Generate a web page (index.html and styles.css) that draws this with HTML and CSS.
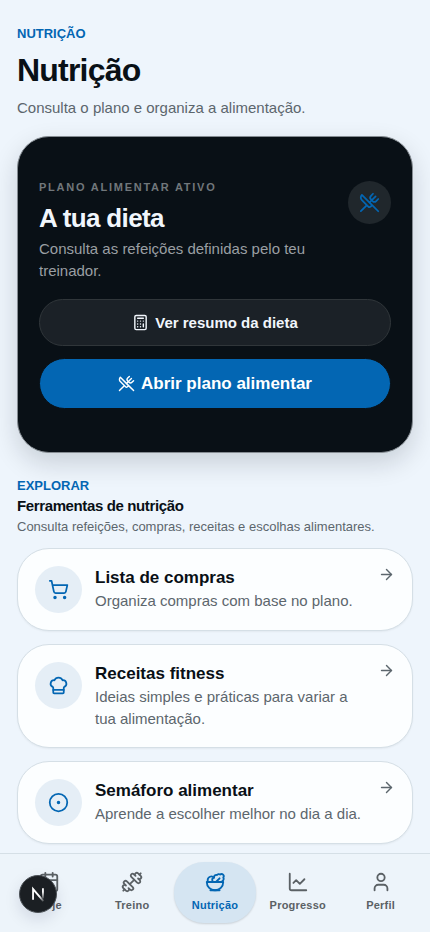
FILE: index.html
```html
<!DOCTYPE html>
<html lang="pt">
<head>
<meta charset="utf-8">
<meta name="viewport" content="width=device-width, initial-scale=1">
<title>Nutrição</title>
<link rel="stylesheet" href="styles.css">
</head>
<body>
<svg class="sprite" aria-hidden="true">
  <symbol id="utensils" viewBox="0 0 24 24"><path d="m16 2-2.3 2.3a3 3 0 0 0 0 4.2l1.8 1.8a3 3 0 0 0 4.2 0L22 8"/><path d="M15 15 3.3 3.3a4.2 4.2 0 0 0 0 6l7.3 7.3c.7.7 2 .7 2.8 0L15 15Zm0 0 7 7"/><path d="m2.1 21.8 6.4-6.3"/><path d="m19 5-7 7"/></symbol>
  <symbol id="arrow" viewBox="0 0 24 24"><path d="M5 12h14"/><path d="m12 5 7 7-7 7"/></symbol>
</svg>
<main class="page">
  <header class="page-header">
    <p class="eyebrow">NUTRIÇÃO</p>
    <h1>Nutrição</h1>
    <p class="lead">Consulta o plano e organiza a alimentação.</p>
  </header>

  <section class="plan">
    <div class="plan-head">
      <div class="plan-text">
        <p class="plan-label">PLANO ALIMENTAR ATIVO</p>
        <h2>A tua dieta</h2>
        <p class="plan-desc">Consulta as refeições definidas pelo teu treinador.</p>
      </div>
      <span class="plan-icon"><svg class="icon icon-md" aria-hidden="true"><use href="#utensils"/></svg></span>
    </div>
    <div class="plan-actions">
      <button class="btn btn-ghost" type="button">
        <svg class="icon icon-sm" viewBox="0 0 24 24" aria-hidden="true"><rect width="16" height="20" x="4" y="2" rx="2"/><path d="M8 6h8M16 14v4M16 10h.01M12 10h.01M8 10h.01M12 14h.01M8 14h.01M12 18h.01M8 18h.01"/></svg>
        Ver resumo da dieta
      </button>
      <button class="btn btn-primary" type="button">
        <svg class="icon icon-sm" aria-hidden="true"><use href="#utensils"/></svg>
        Abrir plano alimentar
      </button>
    </div>
  </section>

  <section class="tools">
    <header class="tools-header">
      <p class="eyebrow">EXPLORAR</p>
      <h2>Ferramentas de nutrição</h2>
      <p class="tools-desc">Consulta refeições, compras, receitas e escolhas alimentares.</p>
    </header>
    <div class="tool-list">
      <a class="tool" href="#compras">
        <span class="tool-icon"><svg class="icon icon-md" viewBox="0 0 24 24" aria-hidden="true"><circle cx="8" cy="21" r="1"/><circle cx="19" cy="21" r="1"/><path d="M2.05 2.05h2l2.66 12.42a2 2 0 0 0 2 1.58h9.78a2 2 0 0 0 1.95-1.57l1.65-7.43H5.12"/></svg></span>
        <span class="tool-text"><strong>Lista de compras</strong><span>Organiza compras com base no plano.</span></span>
        <svg class="icon icon-sm tool-arrow" aria-hidden="true"><use href="#arrow"/></svg>
      </a>
      <a class="tool" href="#receitas">
        <span class="tool-icon"><svg class="icon icon-md" viewBox="0 0 24 24" aria-hidden="true"><path d="M17 21a1 1 0 0 0 1-1v-5.35c0-.457.316-.844.727-1.041a4 4 0 0 0-2.134-7.589 5 5 0 0 0-9.186 0 4 4 0 0 0-2.134 7.588c.411.198.727.585.727 1.041V20a1 1 0 0 0 1 1Z"/><path d="M6 17h12"/></svg></span>
        <span class="tool-text"><strong>Receitas fitness</strong><span>Ideias simples e práticas para variar a tua alimentação.</span></span>
        <svg class="icon icon-sm tool-arrow" aria-hidden="true"><use href="#arrow"/></svg>
      </a>
      <a class="tool" href="#semaforo">
        <span class="tool-icon"><svg class="icon icon-md" viewBox="0 0 24 24" aria-hidden="true"><circle cx="12" cy="12" r="10"/><circle cx="12" cy="12" r="1"/></svg></span>
        <span class="tool-text"><strong>Semáforo alimentar</strong><span>Aprende a escolher melhor no dia a dia.</span></span>
        <svg class="icon icon-sm tool-arrow" aria-hidden="true"><use href="#arrow"/></svg>
      </a>
    </div>
  </section>
</main>

<nav class="tabbar">
  <a class="tab" href="#hoje">
    <svg class="icon icon-nav" viewBox="0 0 24 24" aria-hidden="true"><path d="M8 2v4M16 2v4M3 10h18"/><rect width="18" height="18" x="3" y="4" rx="2"/></svg>
    Hoje
  </a>
  <a class="tab" href="#treino">
    <svg class="icon icon-nav" viewBox="0 0 24 24" aria-hidden="true"><path d="M17.596 12.768a2 2 0 1 0 2.829-2.829l-1.768-1.767a2 2 0 0 0 2.828-2.829l-2.828-2.828a2 2 0 0 0-2.829 2.828l-1.767-1.768a2 2 0 1 0-2.829 2.829z"/><path d="m2.5 21.500 1.400-1.400"/><path d="m20.100 3.900 1.400-1.400"/><path d="M5.343 21.485a2 2 0 1 0 2.829-2.828l1.767 1.768a2 2 0 1 0 2.829-2.829l-6.364-6.364a2 2 0 1 0-2.829 2.829l1.768 1.767a2 2 0 0 0-2.828 2.829z"/><path d="m9.600 14.400 4.800-4.800"/></svg>
    Treino
  </a>
  <a class="tab tab-active" href="#nutricao" aria-current="page">
    <svg class="icon icon-nav" viewBox="0 0 24 24" aria-hidden="true"><path d="M7 21h10"/><path d="M12 21a9 9 0 0 0 9-9H3a9 9 0 0 0 9 9Z"/><path d="M11.38 12a2.4 2.4 0 0 1-.4-4.77 2.4 2.4 0 0 1 3.2-2.77 2.4 2.4 0 0 1 3.47-.63 2.4 2.4 0 0 1 3.37 3.37 2.4 2.4 0 0 1-1.1 3.7 2.51 2.51 0 0 1 .03 1.1"/><path d="m13 12 4-4"/><path d="M10.9 7.25A3.99 3.99 0 0 0 4 10c0 .73.2 1.41.54 2"/></svg>
    Nutrição
  </a>
  <a class="tab" href="#progresso">
    <svg class="icon icon-nav" viewBox="0 0 24 24" aria-hidden="true"><path d="M3 3v16a2 2 0 0 0 2 2h16"/><path d="m19 9-5 5-4-4-3 3"/></svg>
    Progresso
  </a>
  <a class="tab" href="#perfil">
    <svg class="icon icon-nav" viewBox="0 0 24 24" aria-hidden="true"><path d="M19 21v-2a4 4 0 0 0-4-4H9a4 4 0 0 0-4 4v2"/><circle cx="12" cy="7" r="4"/></svg>
    Perfil
  </a>
</nav>

<button class="dev-badge" type="button" aria-label="Ferramentas de desenvolvimento">
  <svg viewBox="0 0 40 40" aria-hidden="true">
    <defs>
      <linearGradient id="fade-a" x1="0" y1="0" x2="1" y2="1"><stop offset=".6" stop-color="#fff"/><stop offset="1" stop-color="#fff" stop-opacity=".2"/></linearGradient>
      <linearGradient id="fade-b" gradientUnits="userSpaceOnUse" x1="0" y1="14" x2="0" y2="26"><stop offset=".3" stop-color="#fff"/><stop offset="1" stop-color="#fff" stop-opacity=".1"/></linearGradient>
    </defs>
    <path d="M14.500 26.500V14.500L26 28" fill="none" stroke="url(#fade-a)" stroke-width="2"/>
    <path d="M25.500 13.500V25" fill="none" stroke="url(#fade-b)" stroke-width="2"/>
  </svg>
</button>
</body>
</html>
```

FILE: styles.css
```css
:root {
  --bg: #eef5fc;
  --ink: #091016;
  --muted: #5c666d;
  --blue: #0366b3;
  --line: #d5dfe6;
}

* {
  box-sizing: border-box;
}

body {
  margin: 0;
  background: var(--bg);
  color: var(--ink);
  font-family: "Liberation Sans", Arial, sans-serif;
  font-size: 15px;
  line-height: 22px;
}

h1, h2, p {
  margin: 0;
}

a {
  color: inherit;
  text-decoration: none;
}

.sprite {
  display: none;
}

.icon {
  flex: none;
  fill: none;
  stroke: currentColor;
  stroke-width: 2;
  stroke-linecap: round;
  stroke-linejoin: round;
}

.icon-sm {
  width: 17px;
  height: 17px;
}

.icon-md {
  width: 21px;
  height: 21px;
}

.icon-nav {
  width: 22px;
  height: 22px;
}

.page {
  padding: 24px 17px 104px;
}

.eyebrow {
  color: var(--blue);
  font-size: 13px;
  font-weight: 700;
  line-height: 20px;
}

h1 {
  margin-top: 8px;
  font-size: 32px;
  line-height: 36px;
  letter-spacing: -0.025em;
}

.lead {
  margin-top: 9px;
  color: var(--muted);
}

.plan {
  margin-top: 17px;
  padding: 40px 21px 43px;
  border: 1px solid #858c92;
  border-radius: 32px;
  background: var(--ink);
  color: #f1f6fc;
  box-shadow: 0 10px 26px rgba(9, 16, 30, 0.16);
}

.plan-head {
  display: flex;
  align-items: flex-start;
  justify-content: space-between;
  gap: 16px;
}

.plan-text {
  max-width: 288px;
}

.plan-label {
  color: #71777b;
  font-size: 11px;
  font-weight: 700;
  line-height: 20px;
  letter-spacing: 0.16em;
}

.plan h2 {
  margin-top: 4px;
  font-size: 26px;
  line-height: 34px;
  letter-spacing: -0.025em;
}

.plan-desc {
  margin-top: 3px;
  color: #9a9fa3;
}

.plan-icon {
  display: grid;
  flex: none;
  place-items: center;
  width: 43px;
  height: 43px;
  margin-top: 4px;
  border-radius: 50%;
  background: #20272c;
  color: var(--blue);
}

.plan-actions {
  display: grid;
  gap: 12px;
  margin-top: 17px;
}

.btn {
  display: flex;
  align-items: center;
  justify-content: center;
  gap: 6px;
  border: 1px solid transparent;
  border-radius: 26px;
  padding: 0 16px;
  font-family: inherit;
  font-weight: 700;
}

.btn-ghost {
  height: 47px;
  border-color: #30363a;
  background: #1b2127;
  color: #f1f6fc;
  font-size: 15px;
}

.btn-primary {
  height: 51px;
  border-color: var(--ink);
  background: var(--blue);
  color: #fff;
  font-size: 17px;
}

.tools {
  margin-top: 23px;
}

.tools-header h2 {
  font-size: 15px;
  line-height: 19px;
  letter-spacing: -0.025em;
}

.tools-desc {
  margin-top: 2px;
  color: var(--muted);
  font-size: 13px;
  line-height: 20px;
}

.tool-list {
  display: grid;
  gap: 13px;
  margin-top: 11px;
}

.tool {
  display: flex;
  align-items: flex-start;
  gap: 13px;
  padding: 17px;
  border: 1px solid var(--line);
  border-radius: 32px;
  background: #fcfeff;
  box-shadow: 0 1px 2px rgba(9, 16, 22, 0.05);
}

.tool-icon {
  display: grid;
  flex: none;
  place-items: center;
  width: 47px;
  height: 47px;
  border-radius: 50%;
  background: #e5eef6;
  color: var(--blue);
}

.tool-text {
  display: grid;
  flex: 1;
  color: var(--muted);
}

.tool-text strong {
  color: var(--ink);
  font-size: 17px;
  line-height: 24px;
}

.tool-arrow {
  color: var(--muted);
}

.tabbar {
  position: fixed;
  right: 0;
  bottom: 0;
  left: 0;
  display: grid;
  grid-template-columns: repeat(5, 1fr);
  padding: 8px 8px 9px;
  border-top: 1px solid var(--line);
  background: #edf4fa;
}

.tab {
  display: flex;
  flex-direction: column;
  align-items: center;
  gap: 4px;
  padding: 9px 0 10px;
  border-radius: 30px;
  color: #5b6165;
  font-size: 11px;
  font-weight: 700;
  line-height: 16px;
  letter-spacing: 0.02em;
}

.tab-active {
  background: #d5e5f2;
  color: var(--blue);
  box-shadow: 0 1px 2px rgba(9, 16, 22, 0.15);
}

.dev-badge {
  position: fixed;
  bottom: 19px;
  left: 19px;
  width: 38px;
  height: 38px;
  padding: 0;
  border: 1px solid #4a5055;
  border-radius: 50%;
  background: #1b1f23;
  box-shadow: 0 6px 16px rgba(9, 16, 60, 0.12);
}

.dev-badge svg {
  display: block;
  width: 100%;
  height: 100%;
}
```
